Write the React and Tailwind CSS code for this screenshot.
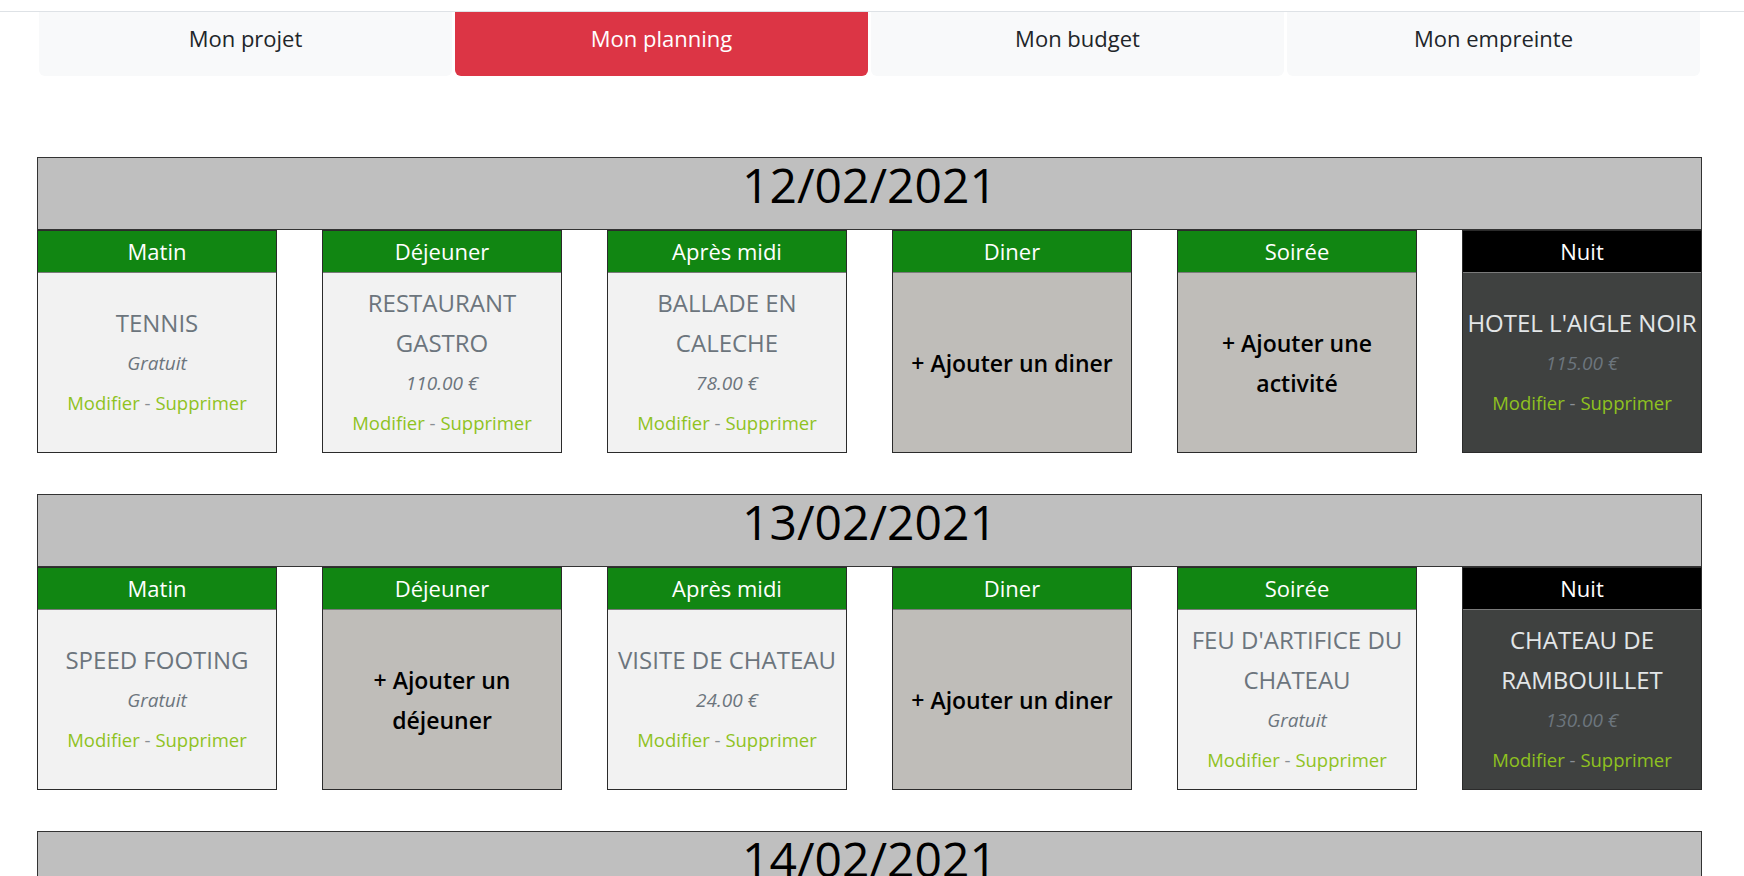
import { useState } from "react";

const tabs = ["Mon projet", "Mon planning", "Mon budget", "Mon empreinte"];

const slots = ["Matin", "Déjeuner", "Après midi", "Diner", "Soirée", "Nuit"];

const days = [
  {
    date: "12/02/2021",
    items: [
      { title: "TENNIS", price: "Gratuit" },
      { title: "RESTAURANT GASTRO", price: "110.00 €" },
      { title: "BALLADE EN CALECHE", price: "78.00 €" },
      { add: "+ Ajouter un diner" },
      { add: "+ Ajouter une activité" },
      { title: "HOTEL L'AIGLE NOIR", price: "115.00 €" },
    ],
  },
  {
    date: "13/02/2021",
    items: [
      { title: "SPEED FOOTING", price: "Gratuit" },
      { add: "+ Ajouter un déjeuner" },
      { title: "VISITE DE CHATEAU", price: "24.00 €" },
      { add: "+ Ajouter un diner" },
      { title: "FEU D'ARTIFICE DU CHATEAU", price: "Gratuit" },
      { title: "CHATEAU DE RAMBOUILLET", price: "130.00 €" },
    ],
  },
  {
    date: "14/02/2021",
    items: [
      { add: "+ Ajouter une activité" },
      { add: "+ Ajouter un déjeuner" },
      { add: "+ Ajouter une activité" },
      { add: "+ Ajouter un diner" },
      { add: "+ Ajouter une activité" },
      { add: "+ Ajouter un hébergement" },
    ],
  },
];

function Slot({ label, item, night }) {
  let body;
  if (item.add) {
    body = (
      <div className="h-[179px] bg-[#bfbdb9] flex items-center justify-center px-[10px] text-center">
        <a href="#" className="text-[23px] leading-[40px] font-semibold text-black">
          {item.add}
        </a>
      </div>
    );
  } else {
    body = (
      <div
        className={
          "h-[179px] flex flex-col items-center justify-center text-center " +
          (night ? "bg-[#3f4140]" : "bg-[#f2f2f2]")
        }
      >
        <div
          className={
            "text-[24px] leading-[40px] " + (night ? "text-[#e3e6e8]" : "text-[#6c757d]")
          }
        >
          {item.title}
        </div>
        <div className="text-[19px] leading-[40px] italic text-[#6c757d]">{item.price}</div>
        <div className="text-[18.5px] leading-[40px] text-[#8a8f94]">
          <a href="#" className="text-[#8fc21f]">Modifier</a> -{" "}
          <a href="#" className="text-[#8fc21f]">Supprimer</a>
        </div>
      </div>
    );
  }

  return (
    <div className="border border-[#2b2b2b]">
      <div
        className={
          "h-[42px] flex items-center justify-center text-white text-[22px] border-b border-[#7a7a7a] " +
          (night ? "bg-black" : "bg-[#118612]")
        }
      >
        {label}
      </div>
      {body}
    </div>
  );
}

export default function App() {
  const [active, setActive] = useState(1);

  return (
    <div className="min-h-screen bg-white pt-[11px] font-['Open_Sans',sans-serif] text-[#212529]">
      <div className="border-t border-[#dee2e6]">
        <div className="pl-[37px] pr-[42px]">
          <div className="grid grid-cols-4 gap-[3px] px-[2px]">
            {tabs.map((t, i) => (
              <button
                key={t}
                onClick={() => setActive(i)}
                className={
                  "h-[64px] pt-[10px] text-[22px] leading-[33px] rounded-b-md flex justify-center " +
                  (active === i ? "bg-[#dc3545] text-white" : "bg-[#f8f9fa] text-[#212529]")
                }
              >
                {t}
              </button>
            ))}
          </div>

          <div className="mt-[81px]">
            {days.map((d) => (
              <div key={d.date} className="mb-[41px]">
                <div className="h-[73px] bg-[#bfbfbf] border border-[#333] text-center pt-[3px]">
                  <h1 className="text-[48px] leading-none text-black">{d.date}</h1>
                </div>
                <div className="grid grid-cols-6 gap-[45px]">
                  {d.items.map((it, i) => (
                    <Slot key={i} label={slots[i]} item={it} night={i === 5} />
                  ))}
                </div>
              </div>
            ))}
          </div>
        </div>
      </div>
    </div>
  );
}
